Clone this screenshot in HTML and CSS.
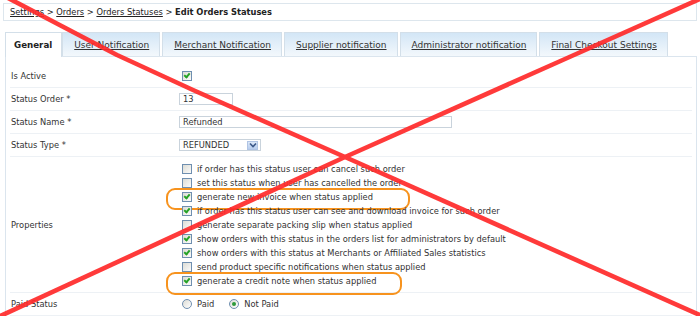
FILE: index.html
```html
<!DOCTYPE html>
<html>
<head>
<meta charset="utf-8">
<link rel="stylesheet" href="styles.css">
</head>
<body>
<div class="page">
  <div class="crumbs">
    <a href="#">Settings</a> &gt; <a href="#">Orders</a> &gt; <a href="#">Orders Statuses</a> &gt; <b>Edit Orders Statuses</b>
  </div>
  <div class="tabs">
    <div class="tab active">General</div>
    <div class="tab"><a href="#">User Notification</a></div>
    <div class="tab"><a href="#">Merchant Notification</a></div>
    <div class="tab"><a href="#">Supplier notification</a></div>
    <div class="tab"><a href="#">Administrator notification</a></div>
    <div class="tab"><a href="#">Final Checkout Settings</a></div>
  </div>
  <div class="panel">
    <div class="row first">
      <div class="label">Is Active</div>
      <div class="ctrl"><span class="cb on"></span></div>
    </div>
    <div class="row">
      <div class="label">Status Order *</div>
      <div class="ctrl"><div class="input short">13</div></div>
    </div>
    <div class="row">
      <div class="label">Status Name *</div>
      <div class="ctrl"><div class="input long">Refunded</div></div>
    </div>
    <div class="row">
      <div class="label">Status Type *</div>
      <div class="ctrl"><div class="select"><span class="sel-text">REFUNDED</span><span class="sel-btn"><svg width="8" height="6" viewBox="0 0 8 6"><path d="M1 1.5 L4 4.5 L7 1.5" fill="none" stroke="#3d5a8a" stroke-width="1.6"/></svg></span></div></div>
    </div>
    <div class="row props">
      <div class="label">Properties</div>
      <div class="ctrl list">
        <div class="item"><span class="cb"></span>if order has this status user can cancel such order</div>
        <div class="item"><span class="cb"></span>set this status when user has cancelled the order</div>
        <div class="item hl hl1"><span class="cb on"></span>generate new invoice when status applied</div>
        <div class="item"><span class="cb on"></span>if order has this status user can see and download invoice for such order</div>
        <div class="item"><span class="cb"></span>generate separate packing slip when status applied</div>
        <div class="item"><span class="cb on"></span>show orders with this status in the orders list for administrators by default</div>
        <div class="item"><span class="cb on"></span>show orders with this status at Merchants or Affiliated Sales statistics</div>
        <div class="item"><span class="cb"></span>send product specific notifications when status applied</div>
        <div class="item hl hl2"><span class="cb on"></span>generate a credit note when status applied</div>
      </div>
    </div>
    <div class="row">
      <div class="label">Paid Status</div>
      <div class="ctrl radios">
        <span class="rb"></span><span class="rl">Paid</span>
        <span class="rb on"></span><span class="rl">Not Paid</span>
      </div>
    </div>
  </div>
  <svg class="cross" width="700" height="316" viewBox="0 0 700 316">
    <defs><filter id="soft"><feGaussianBlur stdDeviation="0.6"/></filter></defs>
    <g filter="url(#soft)" fill="none" stroke="#ff2a2a" stroke-width="4.6" stroke-linecap="round" stroke-linejoin="round" opacity="0.92">
      <path d="M8 -2 L117 55 L193 90 L345 157 L702 316"/>
      <path d="M702 -2 L565 59 L345 157 L-4 318"/>
    </g>
  </svg>
</div>
</body>
</html>
```
FILE: styles.css
```css
* { box-sizing: border-box; }
html, body { margin: 0; padding: 0; background: #fff; }
body {
  font-family: "DejaVu Sans", Verdana, sans-serif;
  font-size: 8.3px;
  color: #333;
}
a { color: #333; text-decoration: underline; }
.page {
  position: relative;
  width: 700px;
  height: 316px;
  overflow: hidden;
  padding: 3px 3px 0 3px;
}
.crumbs {
  height: 18px;
  border: 1px solid #dde6ed;
  padding-left: 6px;
  display: flex;
  align-items: center;
  white-space: pre;
  color: #222;
}
.crumbs a { color: #222; }
.tabs {
  display: flex;
  margin: 11px 0 0 2px;
  height: 24px;
  position: relative;
  z-index: 1;
}
.tab {
  height: 24px;
  padding: 0 10px 0 11px;
  margin-right: 2px;
  border: 1px solid #d3dfe9;
  border-bottom: none;
  background: linear-gradient(#d3e6f6, #f3f8fc);
  display: flex;
  align-items: center;
  font-size: 9px;
}
.tab.active {
  background: #fff;
  font-weight: bold;
  color: #222;
  height: 25px;
  margin-right: 0;
  padding: 0 9px 0 8px;
  font-size: 8.7px;
}
.panel {
  margin-left: 2px;
  border: 1px solid #dbe5ee;
  height: 300px;
  padding: 7px 4px 0 4px;
}
.row {
  display: flex;
  align-items: center;
  height: 23px;
  border-bottom: 1px solid #edf1f5;
}
.row.first { height: 24px; }
.label {
  width: 169px;
  padding-left: 1px;
  flex: none;
}
.ctrl { display: flex; align-items: center; }
.cb {
  display: inline-block;
  width: 10px;
  height: 10px;
  border: 1px solid #6f8fb0;
  background: linear-gradient(135deg, #dcdcd5, #fbfbfa);
  margin-left: 3px;
  position: relative;
  flex: none;
}
.cb.on::after {
  content: "";
  position: absolute;
  left: 2px;
  top: 0px;
  width: 2px;
  height: 4px;
  border: solid #26a326;
  border-width: 0 2px 2px 0;
  transform: rotate(40deg);
}
.input {
  height: 12px;
  border: 1px solid #c9d3dc;
  padding-left: 3px;
  line-height: 10px;
  background: #fff;
}
.input.short { width: 54px; }
.input.long { width: 273px; }
.select {
  width: 82px;
  height: 12px;
  border: 1px solid #c9d3dc;
  display: flex;
  align-items: center;
  justify-content: space-between;
  padding: 0 2px 0 3px;
}
.sel-btn {
  width: 11px;
  height: 9px;
  background: linear-gradient(#dbe7f8, #b7cdee);
  border: 1px solid #b0c4e4;
  display: flex;
  align-items: center;
  justify-content: center;
}
.row.props {
  height: 136px;
  align-items: flex-start;
  padding: 5px 0 5px 0;
}
.row.props .label { align-self: center; }
.list { flex-direction: column; align-items: flex-start; }
.item {
  height: 14px;
  display: flex;
  align-items: center;
  position: relative;
  white-space: nowrap;
}
.item .cb { margin-right: 5px; }
.hl::before {
  content: "";
  position: absolute;
  left: -13px;
  top: -2px;
  height: 18px;
  border: 2px solid #f7931e;
  border-radius: 9px;
}
.hl1::before { width: 240px; }
.hl2::before { width: 232px; height: 19px; }
.radios .rb {
  width: 10px;
  height: 10px;
  border: 1px solid #6f8fb0;
  border-radius: 50%;
  background: linear-gradient(135deg, #dcdcd5, #fff);
  margin-left: 3px;
  margin-right: 5px;
  position: relative;
}
.radios .rb.on::after {
  content: "";
  position: absolute;
  left: 2px;
  top: 2px;
  width: 4px;
  height: 4px;
  border-radius: 50%;
  background: #2e9a3a;
}
.radios .rl { margin-right: 12px; }
.cross {
  position: absolute;
  left: 0;
  top: 0;
  pointer-events: none;
  z-index: 5;
}
```
